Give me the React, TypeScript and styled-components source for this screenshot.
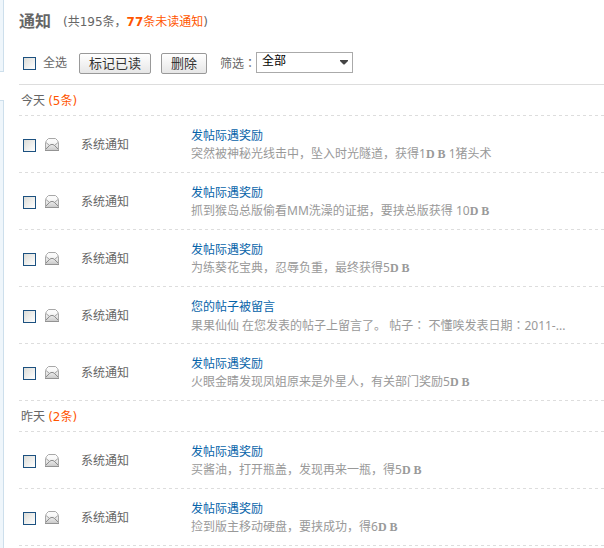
import React from "react";
import styled, { createGlobalStyle } from "styled-components";

const GlobalStyle = createGlobalStyle`
  * { box-sizing: border-box; }
  body {
    margin: 0;
    background: #fff;
    color: #666;
    font: 12px/18px "Noto Sans", "Noto Sans CJK SC", sans-serif;
    overflow: hidden;
  }
`;

const Page = styled.div`
  display: flex;
  height: 100vh;
  overflow: hidden;
`;

const Rail = styled.aside`
  flex: none;
  width: 4px;
  display: flex;
  flex-direction: column;
  gap: 28px;
`;

const RailPanel = styled.div<{ $last?: boolean }>`
  height: 72px;
  flex: ${(p) => (p.$last ? "1 0 auto" : "none")};
  background: #eff6fb;
  border: solid #cddfec;
  border-width: ${(p) => (p.$last ? "1px 1px 0 0" : "0 1px 1px 0")};
`;

const Main = styled.main`
  flex: 1;
  min-width: 0;
  padding: 9px 0 0 15px;
`;

const Header = styled.header`
  display: flex;
  align-items: center;
  gap: 12px;
  height: 24px;
`;

const Title = styled.h1`
  margin: 0;
  font-size: 16px;
  line-height: 24px;
`;

const Summary = styled.p`
  margin: 0;
  padding-top: 2px;
  font-family: "DejaVu Sans", "Noto Sans CJK SC", sans-serif;
`;

const Accent = styled.span`
  color: #f50;
  font-family: "DejaVu Sans", "Noto Sans CJK SC", sans-serif;
`;

const Toolbar = styled.div`
  display: flex;
  align-items: center;
  height: 52px;
  padding: 9px 0 0 4px;
  border-bottom: 1px solid #ddd;
`;

const Check = styled.input`
  appearance: none;
  flex: none;
  width: 13px;
  height: 13px;
  margin: 0;
  border: 1px solid #1c5180;
  background: linear-gradient(135deg, #dcdcd7, #fff);
  &:checked { background: #1c5180; }
`;

const CheckLabel = styled.label`
  display: flex;
  align-items: center;
  gap: 7px;
  margin-right: 12px;
`;

const Button = styled.button`
  height: 21px;
  margin-right: 10px;
  padding: 0 9px;
  border: 1px solid #999;
  border-radius: 2px;
  background: linear-gradient(#fff, #e6e6e6);
  color: #333;
  font: 13px/18px "Noto Sans", "Noto Sans CJK SC", sans-serif;
`;

const FilterLabel = styled.label`
  margin-left: 3px;
`;

const Colon = styled.span`
  font-family: "Noto Sans CJK TC", sans-serif;
`;

const SelectBox = styled.div`
  position: relative;
  margin-bottom: 2px;
  svg {
    position: absolute;
    top: 8px;
    right: 5px;
    pointer-events: none;
  }
`;

const Select = styled.select`
  appearance: none;
  display: block;
  width: 97px;
  height: 21px;
  padding: 0 20px 2px 5px;
  border: 1px solid #aaa;
  border-radius: 0;
  background: #fff;
  color: #000;
  font: 12px/16px "Noto Sans", "Noto Sans CJK SC", sans-serif;
`;

const dashed = `
  background: repeating-linear-gradient(90deg, #ddd 0 3px, #fff 3px 6px) left bottom / 100% 1px no-repeat;
`;

const DayHeading = styled.h2`
  ${dashed}
  margin: 0;
  height: 31px;
  padding: 7px 0 0 2px;
  font-size: 12px;
  line-height: 18px;
  font-weight: normal;
`;

const List = styled.ul`
  margin: 0;
  padding: 0;
  list-style: none;
`;

const Row = styled.li`
  ${dashed}
  display: flex;
  align-items: center;
  height: 57px;
  padding: 0 0 0 4px;

  ${Check} {
    margin-top: 2px;
  }
`;

const Envelope = styled.svg`
  flex: none;
  margin-left: 9px;
`;

const Kind = styled.span`
  flex: none;
  width: 110px;
  margin-left: 22px;
`;

const Body = styled.div`
  flex: 1;
  min-width: 0;
  padding-top: 1px;
`;

const Subject = styled.a`
  display: block;
  color: #0663a9;
  text-decoration: none;
`;

const Detail = styled.p`
  margin: 0;
  color: #999;
  white-space: nowrap;
`;

const Coin = styled.b`
  font-family: "Liberation Serif", serif;
`;

type Item = { title: string; detail: React.ReactNode };

const coin = <Coin>D B</Coin>;
const reward = "发帖际遇奖励";

const days: { name: string; items: Item[] }[] = [
  {
    name: "今天",
    items: [
      { title: reward, detail: <>突然被神秘光线击中，坠入时光隧道，获得1{coin} 1猪头术</> },
      { title: reward, detail: <>抓到猴岛总版偷看MM洗澡的证据，要挟总版获得 10{coin}</> },
      { title: reward, detail: <>为练葵花宝典，忍辱负重，最终获得5{coin}</> },
      {
        title: "您的帖子被留言",
        detail: <>果果仙仙 在您发表的帖子上留言了。 帖子<Colon lang="zh-TW">：</Colon> 不懂唉发表日期<Colon lang="zh-TW">：</Colon>2011-...</>,
      },
      { title: reward, detail: <>火眼金睛发现凤姐原来是外星人，有关部门奖励5{coin}</> },
    ],
  },
  {
    name: "昨天",
    items: [
      { title: reward, detail: <>买酱油，打开瓶盖，发现再来一瓶，得5{coin}</> },
      { title: reward, detail: <>捡到版主移动硬盘，要挟成功，得6{coin}</> },
    ],
  },
];

function OpenEnvelope() {
  return (
    <Envelope width="14" height="13" viewBox="0 0 14 13" aria-hidden="true">
      <defs>
        <linearGradient id="paper" x1="0" y1="0" x2="0" y2="1">
          <stop offset="0.3" stopColor="#fafafa" />
          <stop offset="1" stopColor="#c8c8c8" />
        </linearGradient>
      </defs>
      <path d="M.5 4.500 1.500 2.500 3.500 .5h7l2 2 1 2v8H.5z" fill="url(#paper)" stroke="#a8a8a8" />
      <path d="M1 4.500 4.500 7.500M13 4.500 9.500 7.500" fill="none" stroke="#a0a0a0" />
      <path d="M1 11 4.500 7.500 6 6.500h2l1.500 1L13 11" fill="none" stroke="#8c8c8c" />
      <path d="M0 12.500h14" stroke="#939393" />
    </Envelope>
  );
}

export default function App() {
  return (
    <>
      <GlobalStyle />
      <Page lang="zh-CN">
        <Rail>
          <RailPanel />
          <RailPanel $last />
        </Rail>
        <Main>
          <Header>
            <Title>通知</Title>
            <Summary>
              (共195条，<Accent><b>77</b>条未读通知</Accent>)
            </Summary>
          </Header>
          <Toolbar>
            <CheckLabel>
              <Check type="checkbox" />
              全选
            </CheckLabel>
            <Button type="button">标记已读</Button>
            <Button type="button">删除</Button>
            <FilterLabel htmlFor="filter">筛选<Colon lang="zh-TW">：</Colon></FilterLabel>
            <SelectBox>
              <Select id="filter">
                <option>全部</option>
              </Select>
              <svg width="8" height="5" viewBox="0 0 8 5" aria-hidden="true">
                <path d="M0 0h8v1L4.500 4.500h-1L0 1z" fill="#444" />
              </svg>
            </SelectBox>
          </Toolbar>
          {days.map((day) => (
            <section key={day.name}>
              <DayHeading>
                {day.name} <Accent>({day.items.length}条)</Accent>
              </DayHeading>
              <List>
                {day.items.map((item, i) => (
                  <Row key={i}>
                    <Check type="checkbox" aria-label={item.title} />
                    <OpenEnvelope />
                    <Kind>系统通知</Kind>
                    <Body>
                      <Subject href="#">{item.title}</Subject>
                      <Detail>{item.detail}</Detail>
                    </Body>
                  </Row>
                ))}
              </List>
            </section>
          ))}
        </Main>
      </Page>
    </>
  );
}
